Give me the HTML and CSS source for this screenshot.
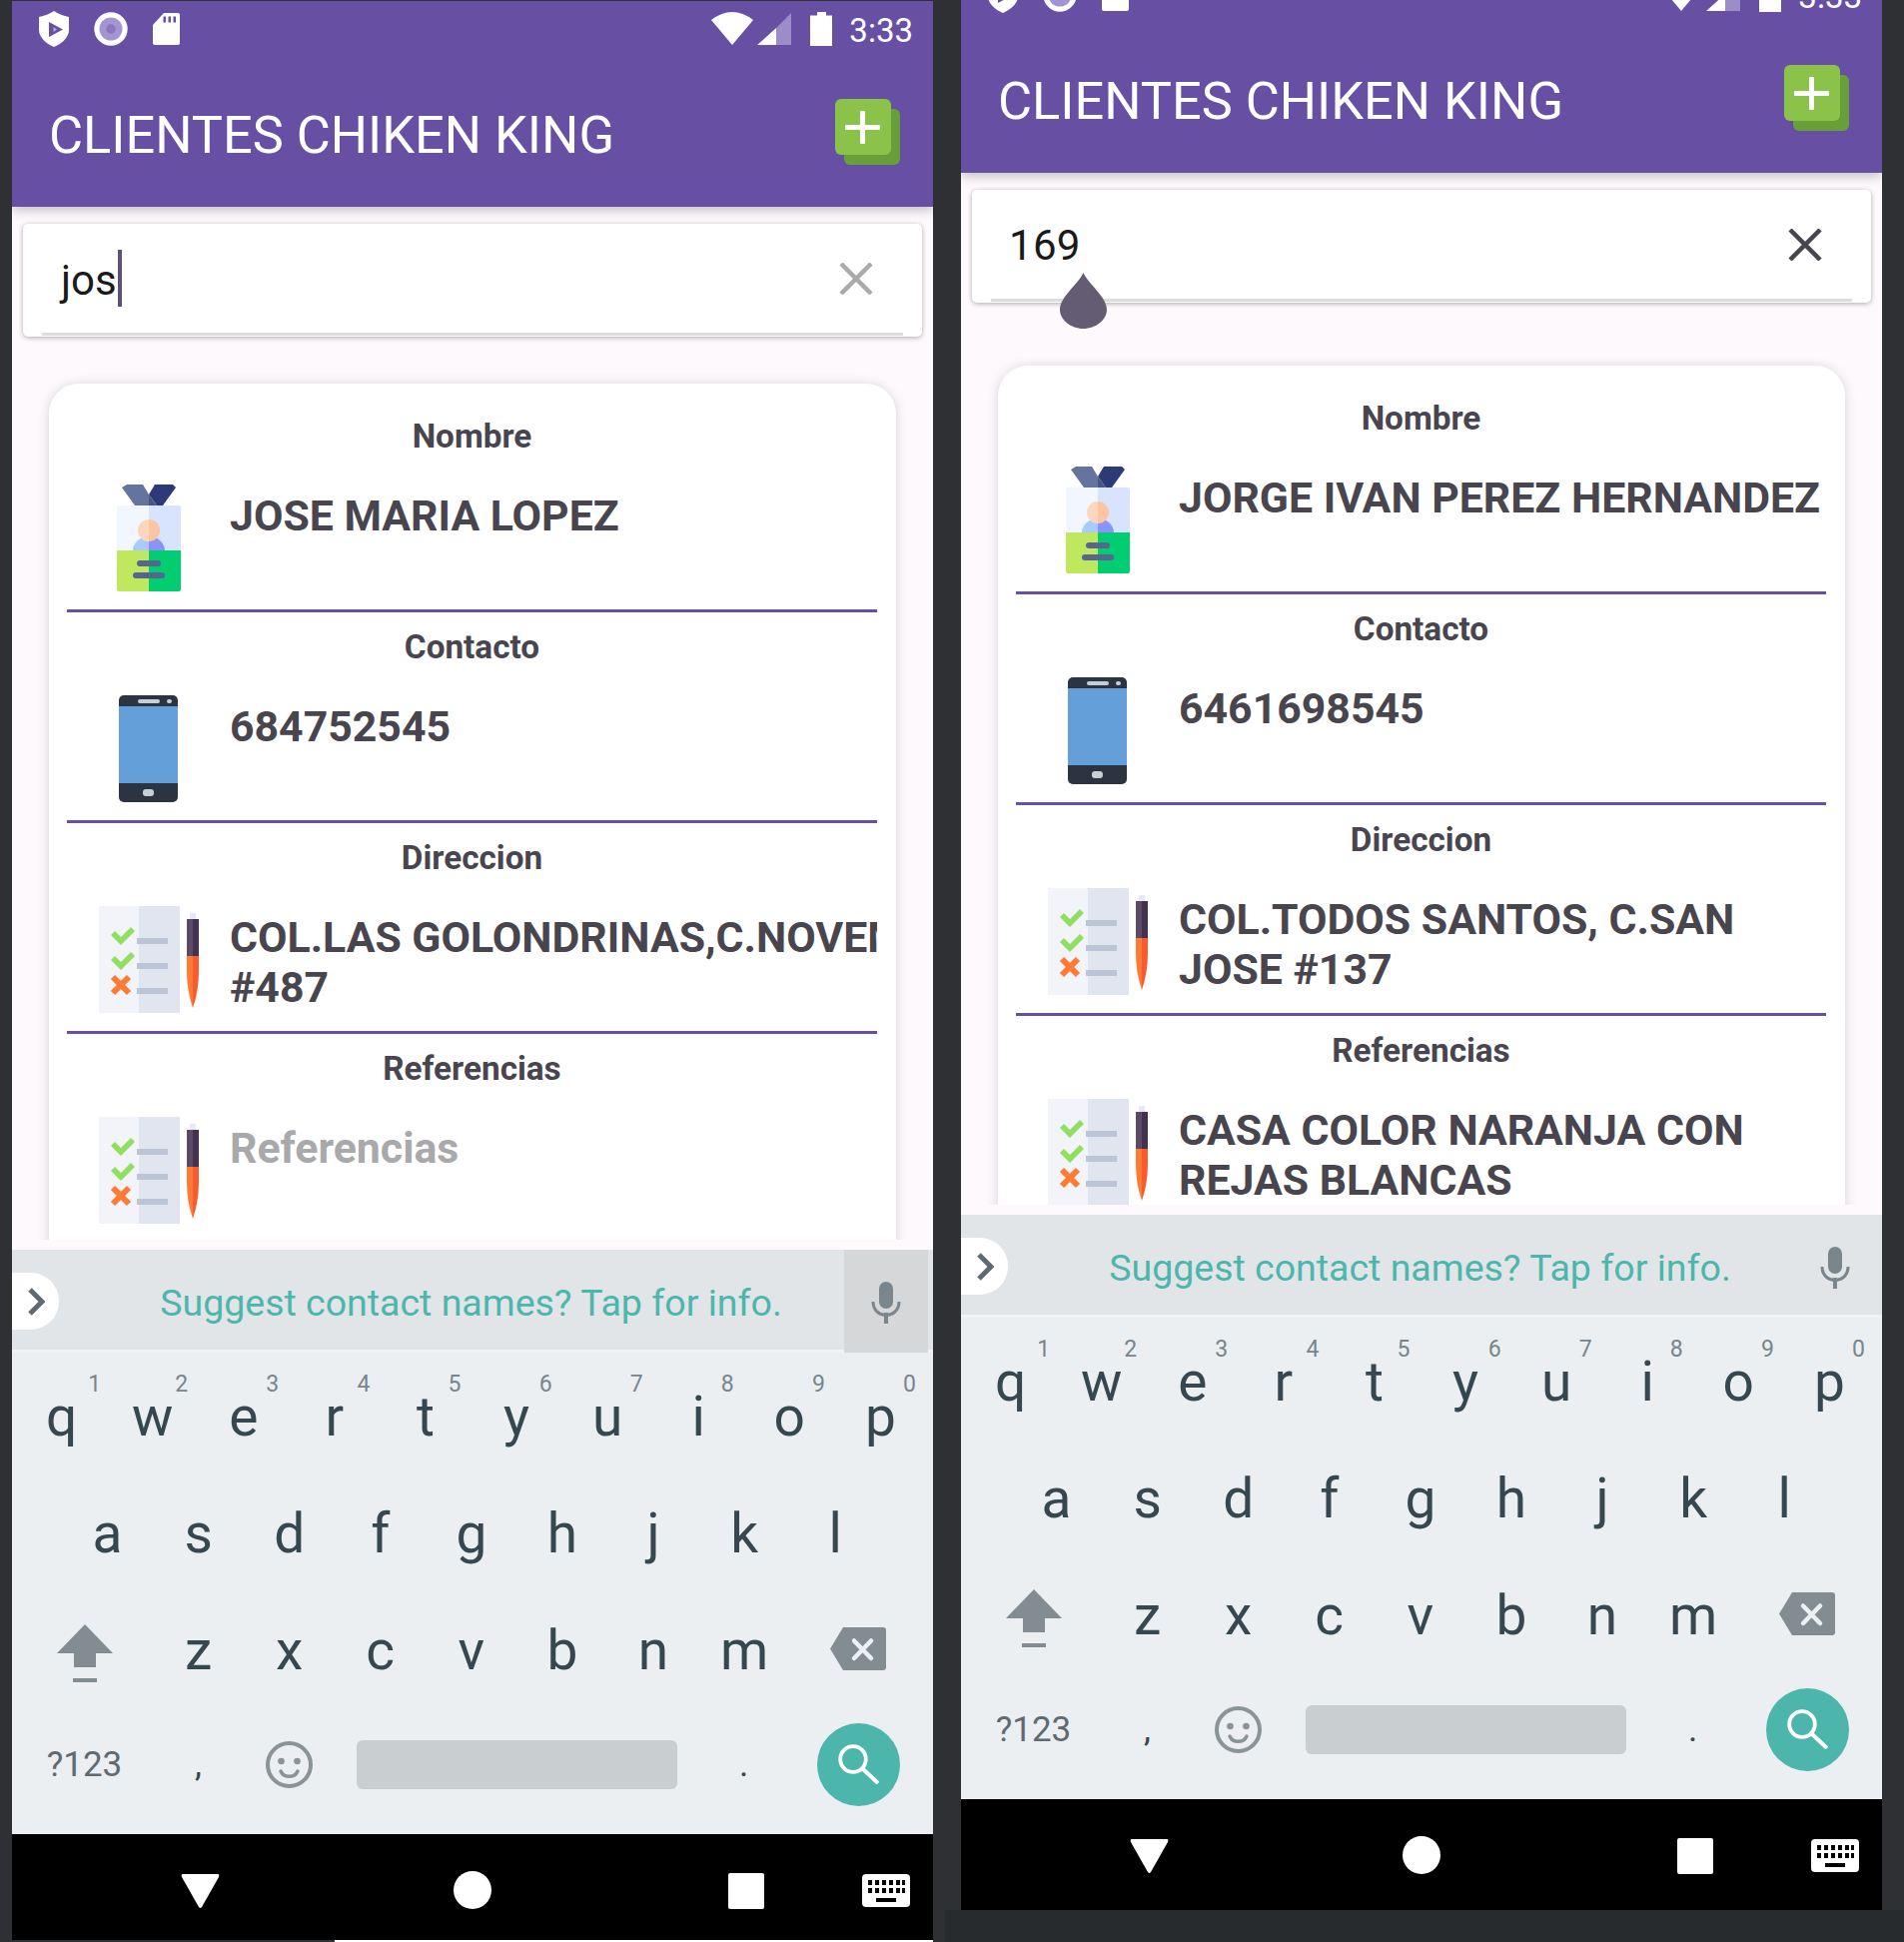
FILE: index.html
```html
<!DOCTYPE html>
<html lang="es">
<head>
<meta charset="utf-8">
<title>Clientes Chiken King</title>
<link rel="stylesheet" href="styles.css">
</head>
<body>
<svg class="defs" width="0" height="0" aria-hidden="true">
  <symbol id="shield" viewBox="0 0 30 36"><path d="M15 0C19 3 25 5 30 6V19C30 27 22 33 15 36 8 33 0 27 0 19V6C5 5 11 3 15 0Z" fill="#fff"/><path d="M10 11 24 18.500 10 26Z" fill="#6750a4"/><path d="M14.500 16 18 18.500 14.500 21Z" fill="#b7a9dc"/></symbol>
  <symbol id="ring" viewBox="0 0 34 34"><circle cx="17" cy="17" r="16.700" fill="#fff"/><circle cx="17" cy="17" r="11.500" fill="#a395cf"/><circle cx="17" cy="17" r="4.700" fill="#8a77bd"/></symbol>
  <symbol id="sd" viewBox="0 0 27 32"><path d="M11 0H25Q27 0 27 2V30Q27 32 25 32H2Q0 32 0 30V12Z" fill="#fff"/><path d="M10.500 3.500H13V9.500H10.500ZM15.500 3.500H18V9.500H15.500ZM20.500 3.500H23V9.500H20.500Z" fill="#6750a4"/></symbol>
  <symbol id="wifi" viewBox="0 0 42 33"><path d="M0 8Q21-8 42 8L21 33Z" fill="#fff"/></symbol>
  <symbol id="signal" viewBox="0 0 34 32"><path d="M34 0V32H19V15Z" fill="#9c8cc8"/><path d="M19 15V32H0Z" fill="#fff"/></symbol>
  <symbol id="battery" viewBox="0 0 22 34"><path d="M7 0H16V3.500H22V34H0V3.500H7Z" fill="#fff"/></symbol>
  <symbol id="badge" viewBox="0 0 64 107">
    <path d="M5 3 10 0H26L32 10V21H18Z" fill="#64749c"/><path d="M59 3 56 0H38L32 10 40 21H46Z" fill="#2c3a78"/><path d="M32 10 40 21H32Z" fill="#4a5580"/>
    <path d="M2 21H32V66H0V23Q0 21 2 21Z" fill="#f1f6ff"/><path d="M32 21H62Q64 21 64 23V66H32Z" fill="#d8e4fe"/>
    <path d="M16 66C16 58 24 52 32 52V66Z" fill="#a9c9ff"/><path d="M48 66C48 58 40 52 32 52V66Z" fill="#8a94f8"/>
    <path d="M32 35A11 11 0 0 0 32 57Z" fill="#fdd7bd"/><path d="M32 35A11 11 0 0 1 32 57Z" fill="#fac5a0"/>
    <path d="M0 66H32V107H2Q0 107 0 105Z" fill="#bfe85f"/><path d="M32 66H64V105Q64 107 62 107H32Z" fill="#00ce70"/>
    <rect x="20" y="76" width="24" height="6" rx="3" fill="#56668f"/><rect x="16" y="88" width="32" height="6" rx="3" fill="#56668f"/>
  </symbol>
  <symbol id="mobile" viewBox="0 0 59 107">
    <rect width="59" height="107" rx="5" fill="#2b3440"/><rect y="11" width="59" height="77" fill="#659fd9"/>
    <rect x="19" y="4" width="22" height="4" rx="2" fill="#c5d0d5"/><rect x="48" y="4" width="5" height="4" rx="2" fill="#c5d0d5"/><rect x="24" y="94" width="11" height="7" rx="3" fill="#c5d0d5"/>
  </symbol>
  <symbol id="checklist" viewBox="0 0 100 107">
    <rect width="40" height="107" fill="#f2f4f9"/><rect x="40" width="41" height="107" fill="#e0e5f0"/>
    <path d="M12 29 16 25 22 31 32 21 36 25 22 39Z" fill="#8fe060"/><path d="M12 54 16 50 22 56 32 46 36 50 22 64Z" fill="#8fe060"/>
    <path d="M14 71 22 79 30 71M14 87 22 79 30 87" fill="none" stroke="#ff7a32" stroke-width="6"/>
    <rect x="38" y="32" width="31" height="6" fill="#bcc5d6"/><rect x="38" y="57" width="31" height="6" fill="#bcc5d6"/><rect x="38" y="82" width="31" height="6" fill="#bcc5d6"/>
    <rect x="91" y="7" width="6" height="6" fill="#e7eaf5"/><rect x="88" y="13" width="6" height="37" fill="#5b4a66"/><rect x="94" y="13" width="6" height="37" fill="#43324f"/>
    <path d="M88 50H94V102Q88 85 88 65Z" fill="#ff7b34"/><path d="M94 50H100V65Q100 85 94 102Z" fill="#f95a30"/>
  </symbol>
  <symbol id="close" viewBox="0 0 34 32"><path d="M2 1 32 31M32 1 2 31" fill="none" stroke="currentColor" stroke-width="4.500"/></symbol>
  <symbol id="chevron" viewBox="0 0 17 28"><path d="M2 2 14 14 2 26" fill="none" stroke="#5f6b72" stroke-width="5"/></symbol>
  <symbol id="mic" viewBox="0 0 30 42"><rect x="8" width="14" height="27" rx="7" fill="#7b868c"/><path d="M2 20C2 38 28 38 28 20" fill="none" stroke="#7b868c" stroke-width="3"/><rect x="13" y="31" width="4" height="11" fill="#7b868c"/></symbol>
  <symbol id="shift" viewBox="0 0 56 58"><path d="M28 0 56 29H39V43H17V29H0Z" fill="#838d91"/><rect x="16" y="54" width="24" height="4" fill="#838d91"/></symbol>
  <symbol id="backspace" viewBox="0 0 56 43"><path d="M13 0H53Q56 0 56 3V40Q56 43 53 43H13L0 21.500Z" fill="#838d91"/><path d="M24 13.500 41 31M41 13.500 24 31" stroke="#eef1f3" stroke-width="4.500" stroke-linecap="round"/></symbol>
  <symbol id="smile" viewBox="0 0 47 47"><circle cx="23.500" cy="23.500" r="21.500" fill="none" stroke="#8a9497" stroke-width="4"/><circle cx="15.500" cy="20" r="3.300" fill="#8a9497"/><circle cx="31.500" cy="20" r="3.300" fill="#8a9497"/><path d="M15 30C18 37 29 37 32 30" fill="none" stroke="#8a9497" stroke-width="3.500" stroke-linecap="round"/></symbol>
  <symbol id="search" viewBox="0 0 41 40"><circle cx="15" cy="15" r="12.800" fill="none" stroke="#fff" stroke-width="3.800"/><path d="M24 24 40 39" stroke="#fff" stroke-width="4"/></symbol>
  <symbol id="back" viewBox="0 0 39 34"><path d="M2 0H37Q39 0 38 3L21 33Q19.500 35 18 33L1 3Q0 0 2 0Z" fill="#fff"/></symbol>
  <symbol id="kbd" viewBox="0 0 48 33"><rect width="48" height="33" rx="4" fill="#fff"/><path d="M6 6H10V11H6ZM13 6H17V11H13ZM20 6H24V11H20ZM27 6H31V11H27ZM34 6H38V11H34ZM40 6H43V11H40ZM6 14H10V19H6ZM13 14H17V19H13ZM20 14H24V19H20ZM27 14H31V19H27ZM34 14H38V19H34ZM40 14H43V19H40ZM14 24H34V28H14Z" fill="#000"/></symbol>
</svg>

<main class="stage">
  <section class="phone phone-left">
    <div class="statusbar">
      <div class="status-group">
        <svg class="ic-shield"><use href="#shield"/></svg>
        <svg class="ic-ring"><use href="#ring"/></svg>
        <svg class="ic-sd"><use href="#sd"/></svg>
      </div>
      <div class="status-group status-right">
        <svg class="ic-wifi"><use href="#wifi"/></svg>
        <svg class="ic-signal"><use href="#signal"/></svg>
        <svg class="ic-battery"><use href="#battery"/></svg>
        <span class="clock">3:33</span>
      </div>
    </div>
    <header class="toolbar">
      <h1 class="title">CLIENTES CHIKEN KING</h1>
      <div class="add"><span class="add-back"></span><span class="add-front"></span></div>
    </header>
    <div class="content">
      <div class="search">
        <span class="query">jos</span><span class="caret"></span>
        <svg class="clear clear-idle"><use href="#close"/></svg>
      </div>
      <article class="card">
        <div class="section"><div class="label">Nombre</div><div class="row"><div class="iconcol"><svg class="i-badge"><use href="#badge"/></svg></div><div class="value">JOSE MARIA LOPEZ</div></div></div>
        <div class="section"><div class="label">Contacto</div><div class="row"><div class="iconcol"><svg class="i-mobile"><use href="#mobile"/></svg></div><div class="value">684752545</div></div></div>
        <div class="section"><div class="label">Direccion</div><div class="row"><div class="iconcol"><svg class="i-check"><use href="#checklist"/></svg></div><div class="value"><span class="nowrap">COL.LAS GOLONDRINAS,C.NOVEMBRE</span><br>#487</div></div></div>
        <div class="section"><div class="label">Referencias</div><div class="row"><div class="iconcol"><svg class="i-check"><use href="#checklist"/></svg></div><div class="value placeholder">Referencias</div></div></div>
      </article>
    </div>
    <div class="keyboard">
      <div class="strip">
        <div class="pill"><svg class="ic-chevron"><use href="#chevron"/></svg></div>
        <div class="suggest">Suggest contact names? Tap for info.</div>
        <div class="micbox micbox-on"><svg class="ic-mic"><use href="#mic"/></svg></div>
      </div>
      <div class="keys">
        <div class="keyrow"><span class="key">q<i class="hint">1</i></span><span class="key">w<i class="hint">2</i></span><span class="key">e<i class="hint">3</i></span><span class="key">r<i class="hint">4</i></span><span class="key">t<i class="hint">5</i></span><span class="key">y<i class="hint">6</i></span><span class="key">u<i class="hint">7</i></span><span class="key">i<i class="hint">8</i></span><span class="key">o<i class="hint">9</i></span><span class="key">p<i class="hint">0</i></span></div>
        <div class="keyrow keyrow-mid"><span class="key">a</span><span class="key">s</span><span class="key">d</span><span class="key">f</span><span class="key">g</span><span class="key">h</span><span class="key">j</span><span class="key">k</span><span class="key">l</span></div>
        <div class="keyrow"><span class="key key-wide"><svg class="ic-shift"><use href="#shift"/></svg></span><span class="key">z</span><span class="key">x</span><span class="key">c</span><span class="key">v</span><span class="key">b</span><span class="key">n</span><span class="key">m</span><span class="key key-wide"><svg class="ic-back"><use href="#backspace"/></svg></span></div>
        <div class="keyrow keyrow-last"><span class="key key-wide key-sym">?123</span><span class="key key-punct">,</span><span class="key"><svg class="ic-smile"><use href="#smile"/></svg></span><span class="space"></span><span class="key key-punct key-dot">.</span><span class="key-go"><svg class="ic-search"><use href="#search"/></svg></span></div>
      </div>
    </div>
    <nav class="navbar">
      <svg class="nav-back"><use href="#back"/></svg>
      <span class="nav-home"></span>
      <span class="nav-recent"></span>
      <svg class="nav-kbd"><use href="#kbd"/></svg>
    </nav>
  </section>

  <section class="phone phone-right">
    <div class="statusbar">
      <div class="status-group">
        <svg class="ic-shield"><use href="#shield"/></svg>
        <svg class="ic-ring"><use href="#ring"/></svg>
        <svg class="ic-sd"><use href="#sd"/></svg>
      </div>
      <div class="status-group status-right">
        <svg class="ic-wifi"><use href="#wifi"/></svg>
        <svg class="ic-signal"><use href="#signal"/></svg>
        <svg class="ic-battery"><use href="#battery"/></svg>
        <span class="clock">3:33</span>
      </div>
    </div>
    <header class="toolbar">
      <h1 class="title">CLIENTES CHIKEN KING</h1>
      <div class="add"><span class="add-back"></span><span class="add-front"></span></div>
    </header>
    <div class="content">
      <div class="search">
        <span class="query">169</span>
        <span class="drop"></span>
        <svg class="clear clear-active"><use href="#close"/></svg>
      </div>
      <article class="card">
        <div class="section"><div class="label">Nombre</div><div class="row"><div class="iconcol"><svg class="i-badge"><use href="#badge"/></svg></div><div class="value">JORGE IVAN PEREZ HERNANDEZ</div></div></div>
        <div class="section"><div class="label">Contacto</div><div class="row"><div class="iconcol"><svg class="i-mobile"><use href="#mobile"/></svg></div><div class="value">6461698545</div></div></div>
        <div class="section"><div class="label">Direccion</div><div class="row"><div class="iconcol"><svg class="i-check"><use href="#checklist"/></svg></div><div class="value">COL.TODOS SANTOS, C.SAN JOSE #137</div></div></div>
        <div class="section"><div class="label">Referencias</div><div class="row"><div class="iconcol"><svg class="i-check"><use href="#checklist"/></svg></div><div class="value">CASA COLOR NARANJA CON REJAS BLANCAS</div></div></div>
      </article>
    </div>
    <div class="keyboard">
      <div class="strip">
        <div class="pill"><svg class="ic-chevron"><use href="#chevron"/></svg></div>
        <div class="suggest">Suggest contact names? Tap for info.</div>
        <div class="micbox"><svg class="ic-mic"><use href="#mic"/></svg></div>
      </div>
      <div class="keys">
        <div class="keyrow"><span class="key">q<i class="hint">1</i></span><span class="key">w<i class="hint">2</i></span><span class="key">e<i class="hint">3</i></span><span class="key">r<i class="hint">4</i></span><span class="key">t<i class="hint">5</i></span><span class="key">y<i class="hint">6</i></span><span class="key">u<i class="hint">7</i></span><span class="key">i<i class="hint">8</i></span><span class="key">o<i class="hint">9</i></span><span class="key">p<i class="hint">0</i></span></div>
        <div class="keyrow keyrow-mid"><span class="key">a</span><span class="key">s</span><span class="key">d</span><span class="key">f</span><span class="key">g</span><span class="key">h</span><span class="key">j</span><span class="key">k</span><span class="key">l</span></div>
        <div class="keyrow"><span class="key key-wide"><svg class="ic-shift"><use href="#shift"/></svg></span><span class="key">z</span><span class="key">x</span><span class="key">c</span><span class="key">v</span><span class="key">b</span><span class="key">n</span><span class="key">m</span><span class="key key-wide"><svg class="ic-back"><use href="#backspace"/></svg></span></div>
        <div class="keyrow keyrow-last"><span class="key key-wide key-sym">?123</span><span class="key key-punct">,</span><span class="key"><svg class="ic-smile"><use href="#smile"/></svg></span><span class="space"></span><span class="key key-punct key-dot">.</span><span class="key-go"><svg class="ic-search"><use href="#search"/></svg></span></div>
      </div>
    </div>
    <nav class="navbar">
      <svg class="nav-back"><use href="#back"/></svg>
      <span class="nav-home"></span>
      <span class="nav-recent"></span>
      <svg class="nav-kbd"><use href="#kbd"/></svg>
    </nav>
  </section>
  <div class="edge-left"></div>
  <div class="edge-right"></div>
</main>
</body>
</html>
```

FILE: styles.css
```css
* { box-sizing: border-box; }
html, body { margin: 0; padding: 0; }
body { width: 1906px; height: 1944px; overflow: hidden; background: #2e3033; font-family: Roboto, "Liberation Sans", sans-serif; }
.defs { position: absolute; }

.stage { position: relative; display: flex; gap: 28px; padding-left: 12px; width: 1906px; height: 1944px; }
.phone { width: 922px; flex: none; display: flex; flex-direction: column; background: #fdf9fc; overflow: hidden; }
.phone-left { margin-top: 1px; height: 1941px; }
.phone-right { margin-top: -33px; height: 1945px; }

.statusbar { position: relative; z-index: 3; height: 60px; padding: 10px 20px 0 27px; display: flex; justify-content: space-between; background: #6750a4; }
.status-group { display: flex; align-items: flex-start; }
.ic-shield { width: 30px; height: 36px; }
.ic-ring { width: 34px; height: 34px; margin: 1px 0 0 25px; }
.ic-sd { width: 27px; height: 32px; margin: 2px 0 0 25px; }
.ic-wifi { width: 42px; height: 33px; margin-top: 1px; }
.ic-signal { width: 34px; height: 32px; margin: 2px 0 0 4px; }
.ic-battery { width: 22px; height: 34px; margin: 1px 0 0 19px; }
.clock { margin-left: 17px; color: #fff; font-size: 33px; line-height: 38px; margin-top: 1px; }

.toolbar { height: 146px; padding: 0 33px 0 37px; display: flex; align-items: center; justify-content: space-between; background: #6750a4; position: relative; z-index: 2; box-shadow: 0 4px 10px rgba(0,0,0,.22); }
.title { margin: 0; color: #fff; font-size: 52.300px; line-height: 60px; font-weight: 400; padding-top: 2px; }
.add { position: relative; width: 65px; height: 66px; margin: -4px 0 0 0; }
.add-back { position: absolute; left: 9px; top: 10px; width: 56px; height: 56px; border-radius: 6px; background: #689f38; }
.add-front { position: absolute; left: 0; top: 0; width: 56px; height: 56px; border-radius: 6px; background: #8bc34a; }
.add-front::before { content: ""; position: absolute; left: 10px; top: 26px; width: 35px; height: 5px; background: #fff; border-radius: 1px; }
.add-front::after { content: ""; position: absolute; left: 25px; top: 12px; width: 5px; height: 33px; background: #fff; border-radius: 1px; }

.content { height: 1034px; flex: none; padding-top: 17px; overflow: hidden; }
.phone-right .content { height: 1033px; }
.search { position: relative; margin: 0 11px; height: 113px; background: #fff; border-radius: 5px; box-shadow: 0 1px 5px rgba(0,0,0,.32); display: flex; align-items: flex-start; padding: 33px 0 0 38px; }
.phone-right .search { padding-left: 37px; padding-top: 32px; }
.search::after { content: ""; position: absolute; left: 19px; right: 19px; bottom: 1px; height: 3px; background: #ddd; }
.query { font-size: 42px; line-height: 48px; color: #1a1a1a; }
.phone-right .query { letter-spacing: .3px; }
.caret { width: 4px; height: 57px; margin: -7px 0 0 1px; background: #5c5278; }
.clear { position: absolute; left: 817px; top: 39px; width: 34px; height: 32px; }
.clear-idle { color: #aaa; }
.clear-active { color: #49454f; }
.drop { position: absolute; left: 88px; top: 83px; width: 47px; height: 56px; background: #645c72; clip-path: path("M23.500 0C29 12 47 24 47 37C47 47 36 56 23.500 56C11 56 0 47 0 37C0 24 18 12 23.500 0Z"); z-index: 3; }

.card { margin: 47px 37px 0; padding: 18px 19px 60px 18px; background: #fff; border-radius: 30px; box-shadow: 0 1px 12px rgba(60,40,70,.18); }
.phone-right .card { margin-top: 63px; }
.section { height: 211px; border-bottom: 3px solid #6750a4; padding-top: 15px; }
.section:last-child { border-bottom: 0; }
.label { height: 40px; line-height: 40px; text-align: center; font-size: 33.300px; font-weight: 700; color: #49454f; }
.row { display: flex; margin-top: 28px; }
.iconcol { width: 163px; flex: none; display: flex; justify-content: center; }
.i-badge { width: 64px; height: 107px; }
.i-mobile { width: 59px; height: 107px; }
.i-check { width: 100px; height: 107px; }
.value { flex: 1; min-width: 0; overflow: hidden; padding-top: 6px; font-size: 42.800px; line-height: 50px; font-weight: 700; color: #49454f; }
.nowrap { white-space: nowrap; }
.placeholder { color: #a9a9ab; }

.keyboard { margin-top: 10px; flex: none; background: #ebeff2; }
.strip { height: 103px; position: relative; display: flex; align-items: center; background: #e2e5e8; border-bottom: 3px solid #f0f2f3; }
.pill { position: absolute; left: 0; top: 23px; width: 47px; height: 57px; background: #fff; border-radius: 0 28px 28px 0; display: flex; align-items: center; padding-left: 16px; }
.ic-chevron { width: 17px; height: 28px; }
.suggest { width: 100%; text-align: center; color: #4db6ac; font-size: 37.500px; line-height: 50px; padding-top: 5px; padding-right: 3px; }
.micbox { position: absolute; left: 833px; top: 0; width: 84px; height: 103px; display: flex; align-items: center; justify-content: center; }
.micbox-on { background: #d5d7d9; }
.ic-mic { width: 30px; height: 42px; margin-top: 2px; }

.keys { padding: 5px 4px 0; height: 482px; }
.keyrow { height: 117px; display: flex; justify-content: flex-start; align-items: center; }
.keyrow-mid { padding-left: 46px; }
.keyrow-last { height: 112px; }
.key { position: relative; width: 91.100px; flex: none; font-size: 55px; color: #37474f; display: flex; justify-content: center; align-items: center; height: 117px; }
.key-wide { width: 137px; }
.key-sym { font-size: 35px; color: #5f6b70; }
.key-punct { font-size: 35px; }
.key-dot { margin-left: 21px; }
.hint { position: absolute; top: 13px; right: 10px; font-style: normal; font-size: 23px; line-height: 28px; color: #78858c; }
.key:first-child .hint { right: 6px; }
.ic-shift { width: 56px; height: 58px; margin-top: 7px; }
.ic-back { width: 56px; height: 43px; margin-top: -2px; }
.ic-smile { width: 47px; height: 47px; }
.space { width: 321px; margin-left: 22px; flex: none; height: 49px; border-radius: 6px; background: #c9ced1; }
.key-go { width: 83px; height: 83px; flex: none; margin-left: 28px; border-radius: 50%; background: #4db6ac; display: flex; align-items: center; justify-content: center; }
.ic-search { width: 41px; height: 40px; }

.navbar { position: relative; flex: 1; background: #000; }
.nav-back { position: absolute; left: 169px; top: 40px; width: 39px; height: 34px; }
.nav-home { position: absolute; left: 442px; top: 37px; width: 38px; height: 38px; border-radius: 50%; background: #fff; }
.nav-recent { position: absolute; left: 717px; top: 39px; width: 36px; height: 36px; border-radius: 2px; background: #fff; }
.nav-kbd { position: absolute; left: 851px; top: 40px; width: 48px; height: 33px; }

.edge-left { position: absolute; left: 335px; top: 1942px; width: 599px; height: 2px; background: #fff; }
.edge-right { position: absolute; left: 946px; top: 1912px; width: 960px; height: 32px; background: #272b2e; }
```
